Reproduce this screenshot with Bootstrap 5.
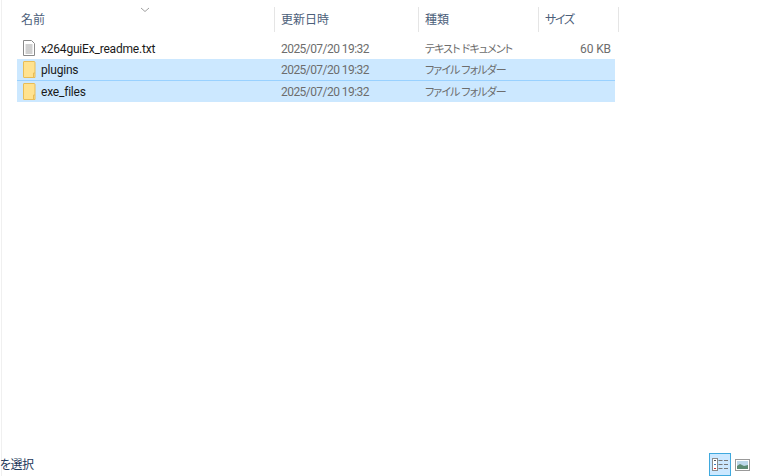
<!DOCTYPE html>
<html lang="ja"><head><meta charset="utf-8"><title>Explorer</title>
<link href="https://cdn.jsdelivr.net/npm/bootstrap@5.3.0/dist/css/bootstrap.min.css" rel="stylesheet">
<style>
html,body{height:476px;overflow:hidden;background:#fff}
body{font-family:Roboto,"Noto Sans CJK JP",sans-serif;font-size:12px;line-height:16px;font-feature-settings:"palt"}
.shell{height:476px;margin-left:1px;padding-top:7px;border-left:1px solid #f0f0f0;position:relative}
.heads{height:25px;padding-left:16px;color:#4c607a}
.hcell{padding-left:6px;border-right:1px solid #e5e5e5;line-height:27px;flex:none}
.hcell.w1{padding-left:3px}
.hcell.w4{letter-spacing:-1.3px}
.w1{width:257px}.w2{width:144px}.w3{width:120px}.w4{width:80px}
.sortmark{position:absolute;left:138px;top:7px}
.rowsbox{margin-top:6px;margin-left:15px;width:598px}
.frow{height:21px;line-height:23px;color:#6d6d6d;flex:none}
.frow.sel{background:#cce8ff;border-bottom:1px solid #99d1ff;height:22px}
.frow.sel.lastsel{border-bottom:0;height:21px}
.c1{width:257px;flex:none;display:flex;align-items:flex-start;color:#1a1a1a;padding-left:5px;gap:3px;letter-spacing:-.2px}
.c1 svg{margin-top:1px}
.c2{width:144px;flex:none;padding-left:7px;letter-spacing:-.55px}
.c3{width:120px;flex:none;padding-left:7px;font-size:11px;letter-spacing:-.9px}
.c4{width:77px;flex:none;text-align:right;padding-right:4px;letter-spacing:-.1px}
.stat{position:absolute;left:-2px;bottom:2px;line-height:18px;color:#1e395b;letter-spacing:-.6px}
.views{position:absolute;right:4px;bottom:0}
.vbtn{width:22px;height:23px;display:flex;align-items:center;justify-content:center}
.vbtn.on{background:#cce8ff;border:1px solid #3fa9de}
</style></head><body>
<div class="shell">
<svg class="sortmark" width="10" height="6" viewBox="0 0 10 6"><path d="M1 1l4 3.5L9 1" fill="none" stroke="#a0a0a0"/></svg>
<div class="heads d-flex">
<div class="hcell w1">名前</div><div class="hcell w2">更新日時</div><div class="hcell w3">種類</div><div class="hcell w4">サイズ</div>
</div>
<div class="rowsbox d-flex flex-column">
<div class="frow d-flex"><div class="c1"><svg width="16" height="18" viewBox="0 0 16 18"><path d="M1.5 1.5h8l3 3v12h-11z" fill="#fff" stroke="#8a8a8a"/><path d="M3.5 6h7M3.5 8h7M3.5 10h7M3.5 12h7M3.5 14h7" stroke="#a0a0a0"/></svg><span>x264guiEx_readme.txt</span></div><div class="c2">2025/07/20 19:32</div><div class="c3">テキスト ドキュメント</div><div class="c4">60 KB</div></div>
<div class="frow sel d-flex"><div class="c1"><svg width="16" height="18" viewBox="0 0 16 18"><path d="M2 1.5h10a1 1 0 0 1 1 1v15H2a.5.5 0 0 1-.5-.5V2a.5.5 0 0 1 .5-.5z" fill="#ffe28f" stroke="#e9bd56"/><path d="M11.5 17.5V13H13" fill="none" stroke="#e9bd56"/></svg><span>plugins</span></div><div class="c2">2025/07/20 19:32</div><div class="c3">ファイル フォルダー</div><div class="c4"></div></div>
<div class="frow sel lastsel d-flex"><div class="c1"><svg width="16" height="18" viewBox="0 0 16 18"><path d="M2 1.5h10a1 1 0 0 1 1 1v15H2a.5.5 0 0 1-.5-.5V2a.5.5 0 0 1 .5-.5z" fill="#ffe28f" stroke="#e9bd56"/><path d="M11.5 17.5V13H13" fill="none" stroke="#e9bd56"/></svg><span>exe_files</span></div><div class="c2">2025/07/20 19:32</div><div class="c3">ファイル フォルダー</div><div class="c4"></div></div>
</div>
<div class="stat">を選択</div>
<div class="views d-flex">
<div class="vbtn on"><svg width="16" height="13" viewBox="0 0 16 13"><rect x=".5" y=".5" width="5" height="12" fill="#fff" stroke="#8a8a8a"/><path d="M2 2.5h2" stroke="#555"/><path d="M2 6.5h2" stroke="#3b7fc4"/><path d="M2 10.5h2" stroke="#c33"/><path d="M6.5 2.5h4M12 2.5h4M6.5 6.5h4M12 6.5h4M6.5 10.5h4M12 10.5h4" stroke="#777"/></svg></div>
<div class="vbtn"><svg width="15" height="12" viewBox="0 0 15 12"><rect x=".5" y=".5" width="14" height="11" fill="#fff" stroke="#999"/><rect x="2" y="2" width="11" height="8" fill="#bcd8ea"/><path d="M2 7l3-2 4 2 4-1v4H2z" fill="#5b8a72"/></svg></div>
</div>
</div>
</body></html>
